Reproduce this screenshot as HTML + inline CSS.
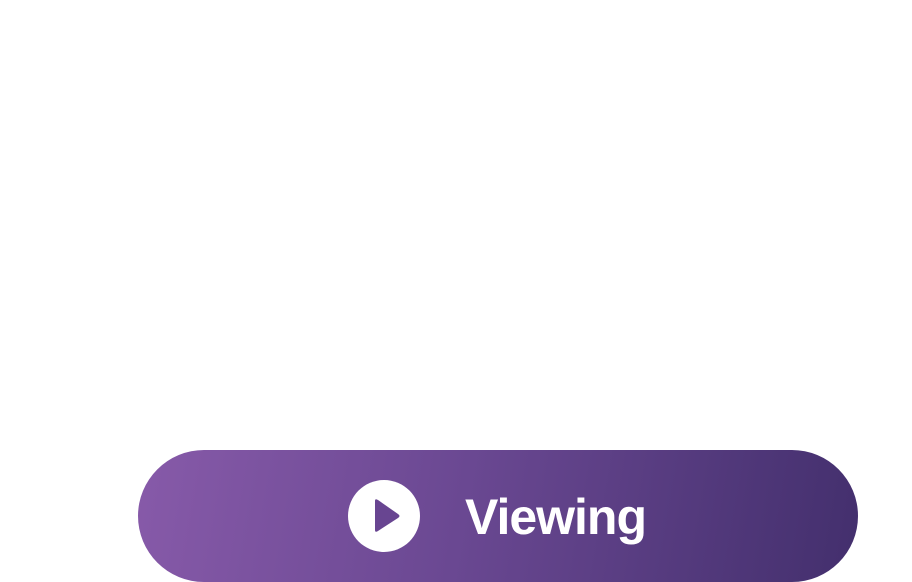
<!DOCTYPE html>
<html><head><style>
body{margin:0;width:912px;height:582px;background:#fff;position:relative;overflow:hidden;font-family:"Liberation Sans",sans-serif}
.btn{position:absolute;left:138px;top:450px;width:720px;height:132px;border-radius:66px;background:linear-gradient(100deg,#875aa9 0%,#6a4892 45%,#432f6d 100%)}
.c{position:absolute;left:348px;top:480px;width:72px;height:72px;border-radius:50%;background:#fff}
.t{position:absolute;left:465px;top:487px;font-size:50px;font-weight:bold;color:#fff;line-height:60px;letter-spacing:-1px}
</style></head><body>
<div class="btn"></div>
<div class="c"><svg width="72" height="72" viewBox="0 0 72 72"><path d="M27 21 L27 50 Q27 53 30 51 L50 38 Q53 36 50 34 L30 20 Q27 18 27 21Z" fill="#684591"/></svg></div>
<div class="t">Viewing</div>
</body></html>
